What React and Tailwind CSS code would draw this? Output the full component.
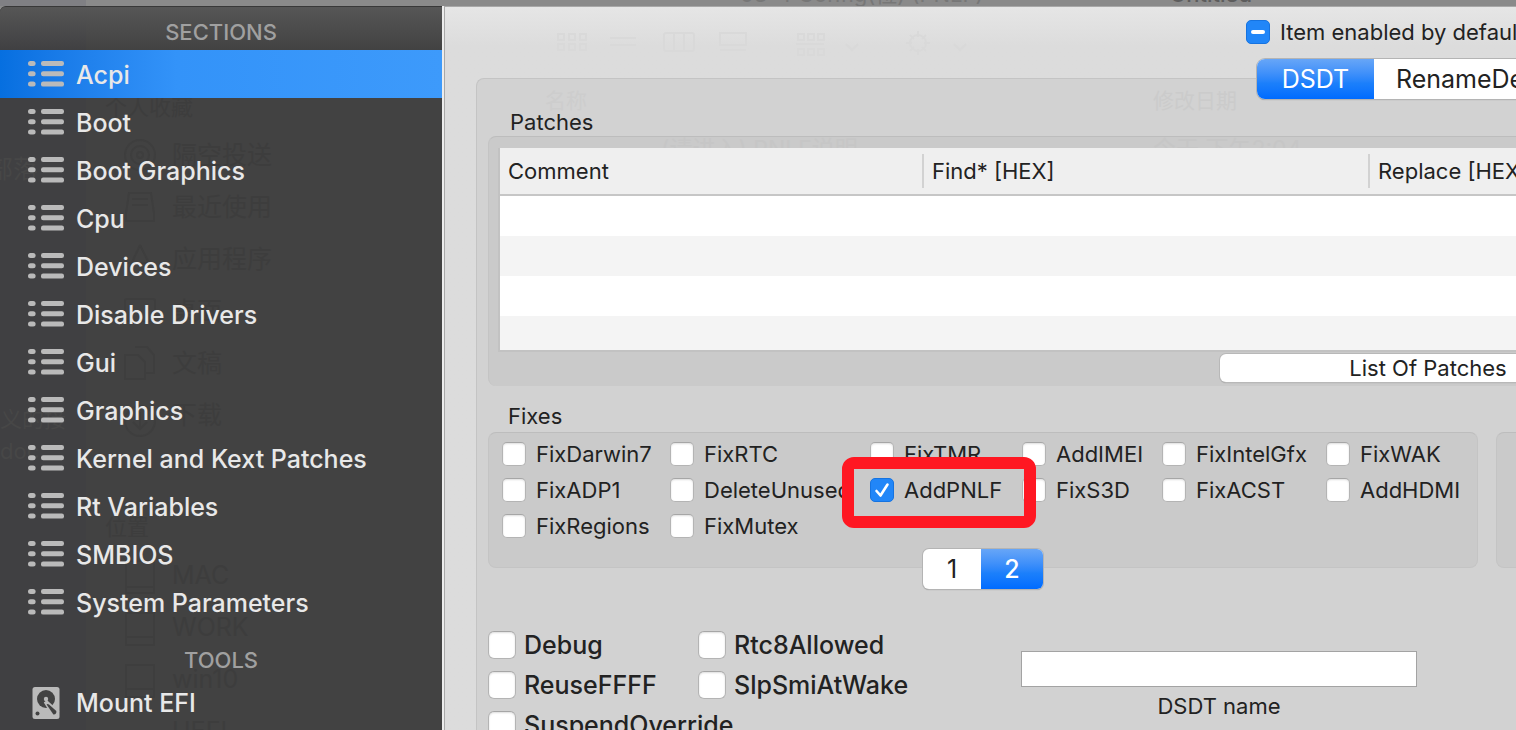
import React from "react";

const sections = [
  "Acpi",
  "Boot",
  "Boot Graphics",
  "Cpu",
  "Devices",
  "Disable Drivers",
  "Gui",
  "Graphics",
  "Kernel and Kext Patches",
  "Rt Variables",
  "SMBIOS",
  "System Parameters",
];

const fixes = [
  ["FixDarwin7", "FixRTC", "FixTMR", "AddIMEI", "FixIntelGfx", "FixWAK"],
  ["FixADP1", "DeleteUnused", "AddPNLF", "FixS3D", "FixACST", "AddHDMI"],
  ["FixRegions", "FixMutex"],
];

const options = [
  ["Debug", "Rtc8Allowed"],
  ["ReuseFFFF", "SlpSmiAtWake"],
  ["SuspendOverride"],
];

function ListIcon() {
  return (
    <svg className="shrink-0" width="36" height="28" viewBox="0 0 36 28" fill="#bababa" aria-hidden="true">
      {[1, 11.3, 21.6].map((y) => (
        <g key={y}>
          <rect x="0" y={y} width="7.6" height="5" rx="2.5" />
          <rect x="13" y={y} width="23" height="5" rx="2.2" />
        </g>
      ))}
    </svg>
  );
}

function DiskIcon() {
  return (
    <svg className="shrink-0" width="36" height="34" viewBox="0 0 36 34" aria-hidden="true">
      <rect x="4.5" y="1" width="27" height="32" rx="2.5" fill="#bababa" />
      <circle cx="18" cy="13" r="9" fill="#424242" />
      <path d="M17.5 15.5 L28.5 25.5 L25.5 28.5 Z" stroke="#bababa" strokeWidth="4" fill="#bababa" />
      <path d="M18.6 18.4 Q19.6 17.4 21 18.6 L28.3 25 Q28.8 28.6 25.4 28.4 Z" fill="#424242" />
      <circle cx="18" cy="13" r="2.2" fill="#bababa" />
      <circle cx="9.5" cy="27.5" r="2" fill="#424242" />
    </svg>
  );
}

function Check({ label, checked, big }) {
  return (
    <label className={big ? "flex h-10 items-center gap-2 whitespace-nowrap text-[25px] font-medium leading-8" : "flex h-9 items-center gap-[10px] whitespace-nowrap text-[22px] leading-7"}>
      <span className="relative flex shrink-0">
        <input
          type="checkbox"
          defaultChecked={checked}
          className={
            (big ? "size-7 rounded-md " : "size-6 rounded-[5px] ") +
            "appearance-none border border-[#b4b4b4] border-t-[#a6a6a6] bg-white shadow-[inset_0_1px_2px_#dddddd] checked:border-[#1673e0] checked:bg-[#2186f8] checked:shadow-none"
          }
        />
        {checked && (
          <svg className="pointer-events-none absolute inset-0" width="24" height="24" viewBox="0 0 24 24" aria-hidden="true">
            <path d="M6.5 13 L10.5 17.5 L17.5 6.5" fill="none" stroke="white" strokeWidth="2.6" strokeLinecap="round" strokeLinejoin="round" />
          </svg>
        )}
      </span>
      {label}
    </label>
  );
}

const finderItems = [
  ["隔空投送", "top-[130px]"],
  ["最近使用", "top-[182px]"],
  ["应用程序", "top-[234px]"],
  ["桌面", "top-[286px]"],
  ["文稿", "top-[338px]"],
  ["下载", "top-[390px]"],
  ["MAC", "top-[550px]"],
  ["WORK", "top-[602px]"],
  ["win10", "top-[654px]"],
  ["UEFI", "top-[706px]"],
];

function SidebarBackdrop() {
  return (
    <div aria-hidden="true" className="pointer-events-none absolute inset-0 overflow-hidden text-[25px] leading-9 text-[#3d3d3d]">
      <div className="absolute inset-y-0 left-0 w-[86px] bg-[#404042]" />
      <span className="absolute left-0 top-[144px] -indent-3 whitespace-nowrap text-[#474747]">部落</span>
      <span className="absolute left-0 top-[394px] whitespace-nowrap text-[22px] text-[#474747]">义的接</span>
      <span className="absolute left-0 top-[426px] text-[22px] text-[#474747]">doc</span>
      <span className="absolute left-[105px] top-[82px] text-[22px]">个人收藏</span>
      <span className="absolute left-[105px] top-[502px] text-[22px]">位置</span>
      {finderItems.map(([name, top]) => (
        <span key={name} className={"absolute left-[172px] " + top}>{name}</span>
      ))}
      <svg className="absolute left-[124px] top-[130px]" width="34" height="600" fill="none" stroke="#3e3e3e" strokeWidth="2">
        <circle cx="16" cy="18" r="15" />
        <circle cx="16" cy="18" r="9" />
        <circle cx="16" cy="18" r="3" />
        <path d="M5 56 h22 l3 20 v8 h-28 v-8 z M8 62 h16 M8 68 h16" />
        <path d="M16 108 L4 134 M16 108 L29 134 M1 126 h30" />
        <rect x="1" y="162" width="30" height="22" rx="2" />
        <path d="M11 210 h12 l7 8 v18 h-9 M1 218 h13 l7 7 v17 h-20 z" />
        <circle cx="16" cy="284" r="15" />
        <path d="M16 275 v16 M9 285 l7 7 l7 -7" />
        <path d="M2 424 h28 v32 h-28 z M2 450 h28 M2 476 h28 v32 h-28 z M2 500 h28 M2 528 h28 v32 h-28 z M2 552 h28" />
      </svg>
    </div>
  );
}

function Sidebar() {
  return (
    <nav className="relative w-[442px] shrink-0 overflow-hidden rounded-tl-md border-t border-[#383838] bg-[#424242]">
      <SidebarBackdrop />
      <div className="relative font-medium">
        <h2 className="flex h-[43px] items-center justify-center bg-linear-to-b from-[#565656] to-[#565656]/0 pt-[6px] text-[22px] leading-7 text-[#a0a0a0]">
          SECTIONS
        </h2>
        <ul>
          {sections.map((name, i) => (
            <li key={name}>
              <a
                href={"#" + name.toLowerCase().replaceAll(" ", "-")}
                className={
                  "flex h-12 items-center gap-3 pl-7 text-[25px] leading-8 text-[#e8e8e8] " +
                  (i === 0 ? "bg-linear-to-r from-[#066fe0] via-[#3393f9] via-40% to-[#3d9afb]" : "")
                }
              >
                <ListIcon />
                <span className="pt-[2px]">{name}</span>
              </a>
            </li>
          ))}
        </ul>
        <h2 className="flex h-[53px] items-center justify-center pt-[14px] text-[22px] leading-7 text-[#a0a0a0]">TOOLS</h2>
        <a href="#mount-efi" className="flex h-12 items-center gap-3 pl-7 text-[25px] leading-8 text-[#e8e8e8]">
          <DiskIcon />
          Mount EFI
        </a>
      </div>
    </nav>
  );
}

function MainBackdrop() {
  return (
    <svg aria-hidden="true" className="pointer-events-none absolute left-[110px] top-[24px]" width="440" height="36" fill="none" stroke="#d9d9d9" strokeWidth="2">
      {[4, 15, 26].map((x) => (
        <g key={x}>
          <rect x={x} y="4" width="6" height="6" />
          <rect x={x} y="14" width="6" height="6" />
        </g>
      ))}
      <path d="M56 8 h26 M56 15 h26" />
      <rect x="110" y="3" width="30" height="18" rx="2" />
      <path d="M120 3 v18 M130 3 v18" />
      <path d="M166 3 h26 v12 h-26 z M166 20 h26" />
      <path d="M244 4 h6 v6 h-6 z M254 4 h6 v6 h-6 z M264 4 h6 v6 h-6 z M244 19 h6 v6 h-6 z M254 19 h6 v6 h-6 z M264 19 h6 v6 h-6 z" />
      <path d="M242 14 h28 M292 14 l6 6 l6 -6 M400 14 l6 6 l6 -6" />
      <circle cx="364" cy="13" r="8" />
      <path d="M364 1 v6 M364 19 v6 M352 13 h6 M370 13 h6 M356 5 l4 4 M368 17 l4 4 M372 5 l-4 4 M360 17 l-4 4" />
    </svg>
  );
}

function PatchesTable() {
  const head = "border-b-2 border-[#c6c6c6] bg-[#efefef] p-0 font-normal";
  const divider = "flex h-[34px] items-center border-r-2 border-[#d2d2d2] pl-2";
  return (
    <table className="relative w-full table-fixed border-separate border-spacing-0 border-b-2 border-l-2 border-[#c2c2c2] bg-white">
      <colgroup>
        <col className="w-[424px]" />
        <col className="w-[446px]" />
        <col />
      </colgroup>
      <thead>
        <tr className="h-12 text-left text-[22px] leading-7 whitespace-nowrap">
          <th className={head}><div className={divider}>Comment</div></th>
          <th className={head}><div className={divider}>Find* [HEX]</div></th>
          <th className={head}><div className="flex h-[34px] items-center pl-2">Replace [HEX]</div></th>
        </tr>
      </thead>
      <tbody>
        <tr className="h-10"><td className="p-0" colSpan={3} /></tr>
        <tr className="h-10 bg-[#f4f4f4]"><td className="p-0" colSpan={3} /></tr>
        <tr className="h-10"><td className="p-0" colSpan={3} /></tr>
        <tr className="h-[34px] bg-[#f4f4f4]"><td className="p-0" colSpan={3} /></tr>
      </tbody>
    </table>
  );
}

const selectedTab = "bg-linear-to-b from-[#67a6f7] via-[#1c80fb] via-60% to-[#006bff] text-white";

export default function App() {
  return (
    <div className="flex h-screen flex-col overflow-hidden bg-[#8a8a8a] font-['Inter','Noto_Sans_CJK_SC',sans-serif] text-[#222222]">
      <div className="relative h-[6px] shrink-0 overflow-hidden bg-[#8a8a8a]">
        <span aria-hidden="true" className="absolute left-[1170px] bottom-0 text-[22px] font-medium leading-6 text-[#5d5d5d]">Untitled</span>
        <span aria-hidden="true" className="absolute left-[740px] bottom-0 text-[22px] leading-6 text-[#777777]">03-4 Config(位) (PNLF)</span>
        <div className="h-full w-[86px] bg-[#808084]" />
      </div>
      <div className="flex min-h-0 flex-1">
        <Sidebar />
        <main className="relative min-w-0 flex-1 overflow-hidden border-l-2 border-[#ececec] bg-[#dcdcdc] bg-linear-to-b from-[#e6e6e6] to-[#dcdcdc] to-[40px] shadow-[inset_1px_1px_0_#a8a8a8]">
          <MainBackdrop />
          <header className="relative z-10 -mb-[21px] pt-[14px]">
            <label className="ml-[802px] flex h-6 items-center gap-[10px] text-[22px] leading-7 whitespace-nowrap">
              <span className="relative flex shrink-0">
                <input type="checkbox" defaultChecked className="size-6 appearance-none rounded-[5px] border border-[#1673e0] bg-[#2186f8]" />
                <span className="pointer-events-none absolute left-[5px] top-[10px] h-1 w-[14px] rounded-full bg-white" />
              </span>
              Item enabled by default
            </label>
            <div className="mt-[15px] ml-[813px] flex h-10 w-[620px] overflow-hidden rounded-lg bg-white text-[25px] leading-8 shadow-[0_0_0_1px_#b4b4b4,0_1px_1px_#8a8a8a]">
              <button className={"w-[117px] " + selectedTab}>DSDT</button>
              <button className="px-[22px]">RenameDevices</button>
            </div>
          </header>

          <section className="relative ml-8 h-full rounded-tl-lg border-t border-l border-[#c4c4c4] bg-[#d2d2d2] pt-[29px] pl-[11px]">
            <span aria-hidden="true" className="absolute left-[68px] top-[6px] text-[21px] leading-8 text-[#cdcdcd]">名称</span>
            <span aria-hidden="true" className="absolute left-[676px] top-[6px] text-[21px] leading-8 text-[#cbcbcb]">修改日期</span>

            <h3 className="relative h-7 pl-[22px] text-[22px] leading-7">Patches</h3>
            <div className="relative rounded-l-lg border-t border-l border-[#bdbdbd] border-l-[#c4c4c4] bg-[#cacaca] pt-[11px] pb-1 pl-[9px]">
              <span aria-hidden="true" className="absolute left-[172px] top-0 text-[23px] leading-6 text-[#c6c6c6]">(请进入) PNLF说明</span>
              <span aria-hidden="true" className="absolute left-[664px] top-0 text-[23px] leading-6 text-[#c6c6c6]">今天 下午2:04</span>
              <PatchesTable />
              <button className="mt-[2px] ml-[722px] block h-7 w-[416px] rounded-md bg-white text-[22px] leading-7 shadow-[0_0_0_1px_#b8b8b8,0_1px_1px_#8a8a8a]">
                List Of Patches
              </button>
            </div>

            <h3 className="mt-4 h-[30px] pl-5 text-[22px] leading-7">Fixes</h3>
            <div className="flex gap-[18px]">
              <div className="flex w-[990px] shrink-0 flex-col items-center">
                <div className="relative grid h-[136px] w-full grid-cols-[168px_200px_152px_140px_164px_auto] content-start rounded-lg border border-[#c4c4c4] border-t-[#bdbdbd] bg-[#cacaca] pt-[3px] pl-[13px]">
                  {fixes.map((row, r) => (
                    <React.Fragment key={r}>
                      {row.map((name) => (
                        <Check key={name} label={name} checked={name === "AddPNLF"} />
                      ))}
                    </React.Fragment>
                  ))}
                  <div aria-hidden="true" className="pointer-events-none absolute top-[24px] left-[353px] h-[71px] w-[194px] rounded-xl border-[12px] border-[#ff1722]" />
                </div>
                <div className="relative -mt-[19px] flex h-10 w-[120px] overflow-hidden rounded-md bg-white text-[25px] leading-8 shadow-[0_0_0_1px_#b4b4b4,0_1px_1px_#8a8a8a]">
                  <button className="w-[58px]">1</button>
                  <button className={"flex-1 font-medium " + selectedTab}>2</button>
                </div>
              </div>
              <div className="h-[136px] min-w-0 flex-1 rounded-l-lg border border-r-0 border-[#c4c4c4] border-t-[#bdbdbd] bg-[#cacaca]" />
            </div>

            <div className="mt-9 flex">
              <div className="grid w-[533px] grid-cols-[210px_1fr] content-start">
                {options.flat().map((name) => (
                  <Check key={name} label={name} big />
                ))}
              </div>
              <div className="flex w-[396px] flex-col items-center gap-[5px] pt-[26px]">
                <input id="dsdt-name" type="text" className="h-9 w-full border border-[#a3a3a3] bg-white px-2 text-[22px]" />
                <label htmlFor="dsdt-name" className="text-[22px] leading-7">DSDT name</label>
              </div>
            </div>
          </section>
        </main>
      </div>
    </div>
  );
}
